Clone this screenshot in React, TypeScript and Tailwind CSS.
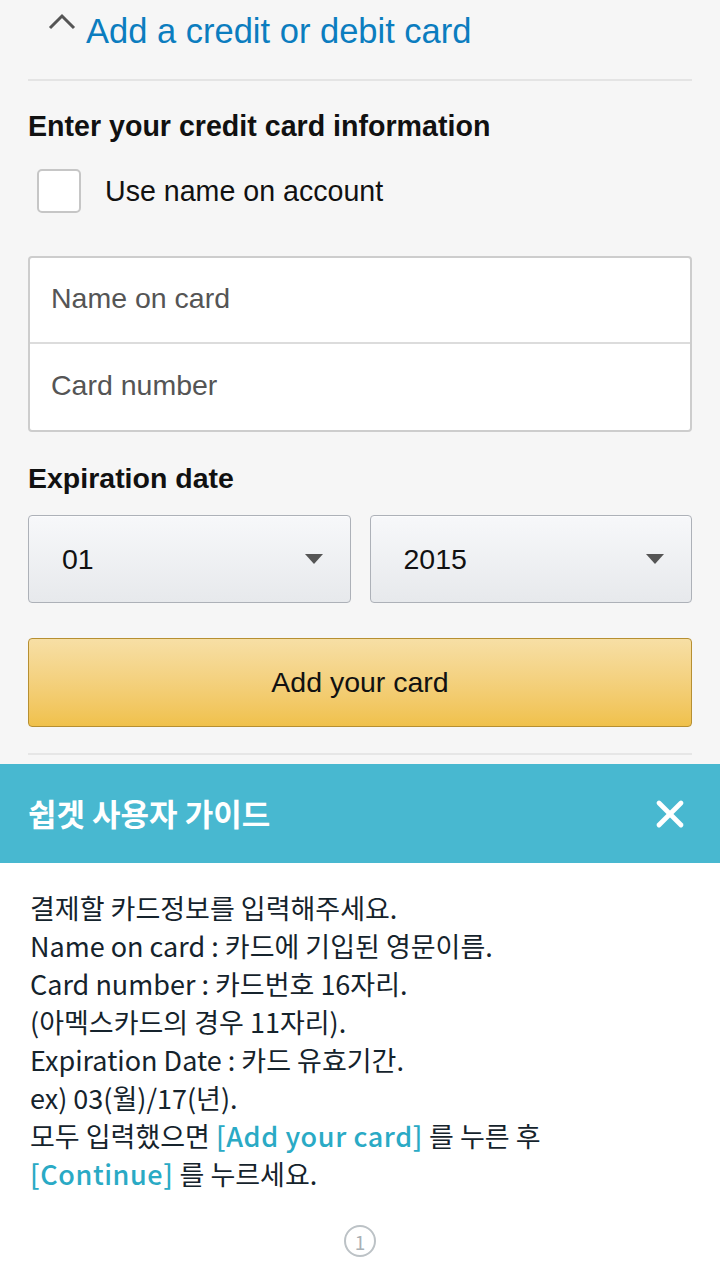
import { X } from 'lucide-react'

const sans = { fontFamily: '"Liberation Sans", Arial, sans-serif' }
const kr = { fontFamily: '"Noto Sans CJK KR", "Noto Sans", sans-serif' }

function Caret() {
  return (
    <svg width="28" height="18" viewBox="0 0 28 18" className="shrink-0">
      <path d="M2 15 L14 3 L26 15" fill="none" stroke="#555" strokeWidth="3" />
    </svg>
  )
}

function SelectBox({ value }: { value: string }) {
  return (
    <div className="flex h-[88px] flex-1 items-center justify-between rounded-[4px] border border-[#adb1b8] bg-gradient-to-b from-[#f7f8fa] to-[#e7e9ec] pl-[33px] pr-[27px] shadow-[inset_0_1px_0_rgba(255,255,255,0.6)]">
      <span className="text-[28.5px] text-[#111]">{value}</span>
      <svg width="18" height="10" viewBox="0 0 18 10">
        <path d="M0 0 H18 L9 10 Z" fill="#555" />
      </svg>
    </div>
  )
}

function Hl({ children }: { children: React.ReactNode }) {
  return <span className="font-medium tracking-[0.6px] text-[#2aaac5]">{children}</span>
}

export default function App() {
  return (
    <div className="flex min-h-[1280px] w-[720px] flex-col bg-[#f6f6f6]" style={sans}>
      <div className="px-[28px]">
        <div className="flex h-[79px] items-start gap-[10px] pl-[20px] pt-[11px]">
          <div className="pt-[2px]">
            <Caret />
          </div>
          <span className="text-[34.5px] leading-[40px] text-[#0b7dbf]">Add a credit or debit card</span>
        </div>
        <div className="h-[2px] bg-[#e4e4e4]" />

        <h2 className="mt-[29px] text-[28.6px] font-bold leading-[32px] text-[#111]">
          Enter your credit card information
        </h2>

        <label className="mt-[27px] flex items-center gap-[24px] pl-[9px]">
          <span className="h-[44px] w-[44px] rounded-[5px] border-2 border-[#c6c6c6] bg-white" />
          <span className="text-[28.6px] text-[#111]">Use name on account</span>
        </label>

        <div className="mt-[43px] overflow-hidden rounded-[4px] border-2 border-[#cdcdcd] bg-white">
          <div className="flex h-[86px] items-center border-b-2 border-[#dcdcdc] pb-[4px] pl-[21px] text-[28.5px] text-[#555]">
            Name on card
          </div>
          <div className="flex h-[86px] items-center pb-[3px] pl-[21px] text-[28.5px] text-[#555]">Card number</div>
        </div>

        <h3 className="mt-[30px] text-[28.5px] font-bold leading-[32px] text-[#111]">Expiration date</h3>

        <div className="mt-[21px] flex gap-[19px]">
          <SelectBox value="01" />
          <SelectBox value="2015" />
        </div>

        <button className="mt-[35px] flex h-[89px] w-full items-center justify-center rounded-[4px] border border-[#b68f31] bg-gradient-to-b from-[#f7dfa5] to-[#f0c14b] text-[28.5px] text-[#111]">
          Add your card
        </button>

        <div className="mt-[26px] h-[2px] bg-[#e6e6e6]" />
      </div>

      <div className="mt-[9px] flex h-[99px] items-center justify-between bg-[#48b8d0] pl-[28px] pr-[28px]" style={kr}>
        <span className="text-[31px] font-bold text-white">쉽겟 사용자 가이드</span>
        <X size={44} strokeWidth={2.6} color="#ffffff" />
      </div>

      <div className="flex flex-1 flex-col bg-white" style={kr}>
        <div className="px-[30px] pt-[26px] text-[27px] leading-[38px] text-[#15232c]">
          <p>결제할 카드정보를 입력해주세요.</p>
          <p>Name on card : 카드에 기입된 영문이름.</p>
          <p>Card number : 카드번호 16자리.</p>
          <p>(아멕스카드의 경우 11자리).</p>
          <p>Expiration Date : 카드 유효기간.</p>
          <p>ex) 03(월)/17(년).</p>
          <p>
            모두 입력했으면 <Hl>[Add your card]</Hl> 를 누른 후
          </p>
          <p>
            <Hl>[Continue]</Hl> 를 누르세요.
          </p>
        </div>
        <div className="mt-[32px] flex justify-center">
          <span className="flex h-[32px] w-[32px] items-center justify-center rounded-full border-2 border-[#bcc2c6] text-[19px] leading-none text-[#a9b0b5]">
            1
          </span>
        </div>
      </div>
    </div>
  )
}
